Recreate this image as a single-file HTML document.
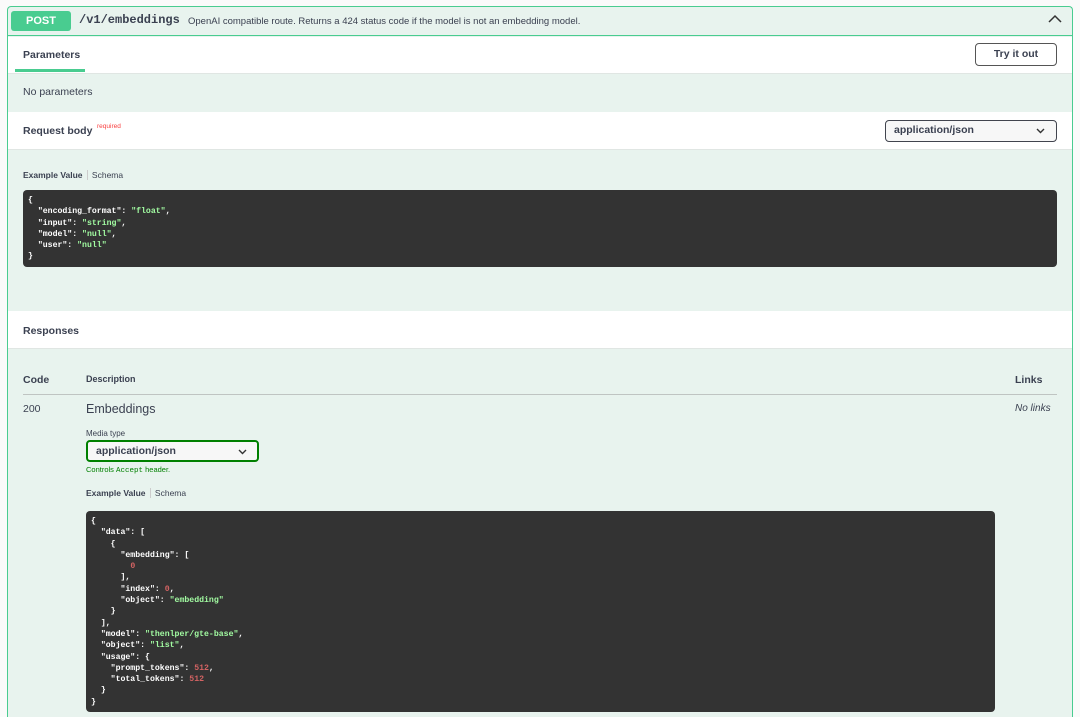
<!DOCTYPE html>
<html><head><style>
*{margin:0;padding:0;box-sizing:border-box}
html,body{width:1080px;height:717px;overflow:hidden}
body{background:#fafafa;font-family:"Liberation Sans",sans-serif;color:#3b4151;position:relative}
.a{position:absolute}
.box{left:7px;top:6px;width:1066px;height:711px;border:1px solid #49cc90;border-bottom:none;border-radius:4px 4px 0 0;background:#e8f3ee}
.w{background:#fff;left:8px;width:1064px}
pre{font-family:"Liberation Mono",monospace;font-weight:bold;font-size:8.2px;line-height:11.3px;color:#fff;background:#333;border-radius:4px;padding:5px 5px}
.s{color:#a2fca2}.n{color:#d36363}
.b{font-weight:bold;font-size:10.5px}
</style></head><body>
<div class="a box"></div>
<div class="a" style="left:8px;top:7px;width:1064px;height:29px;border-bottom:1px solid #49cc90"></div>
<div class="a" style="left:11px;top:11px;width:60px;height:20px;background:#49cc90;border-radius:3px;color:#fff;font-weight:bold;font-size:11px;text-align:center;line-height:20px">POST</div>
<div class="a" style="left:79px;top:13px;font-family:'Liberation Mono',monospace;font-weight:bold;font-size:12px">/v1/embeddings</div>
<div class="a" style="left:188px;top:16px;font-size:9.5px">OpenAI compatible route. Returns a 424 status code if the model is not an embedding model.</div>
<svg class="a" style="left:1048px;top:14px" width="14" height="10"><path d="M1 8 L7 2 L13 8" stroke="#333" stroke-width="1.5" fill="none"/></svg>
<div class="a w" style="top:37px;height:37px;border-bottom:1px solid #e0e6e3"></div>
<div class="a b" style="left:23px;top:49px">Parameters</div>
<div class="a" style="left:15px;top:69px;width:70px;height:3px;background:#49cc90"></div>
<div class="a" style="left:975px;top:43px;width:82px;height:23px;border:1.5px solid #555;border-radius:4px;font-weight:bold;font-size:10.5px;text-align:center;line-height:20px;background:#fff">Try it out</div>
<div class="a" style="left:23px;top:86px;font-size:10.5px">No parameters</div>
<div class="a w" style="top:112px;height:38px;border-bottom:1px solid #e0e6e3"></div>
<div class="a b" style="left:23px;top:125px">Request body</div>
<div class="a" style="left:97px;top:123px;font-size:6.5px;color:#f93e3e">required</div>
<div class="a" style="left:885px;top:120px;width:172px;height:22px;border:1.5px solid #41444e;border-radius:4px;background:#f7f7f7;font-weight:bold;font-size:10.5px;line-height:19px;padding-left:8px">application/json</div>
<svg class="a" style="left:1036px;top:128px" width="9" height="6"><path d="M1 1 L4.5 4.5 L8 1" stroke="#333" stroke-width="1.4" fill="none"/></svg>
<div class="a" style="left:23px;top:170px;font-size:8.5px"><b>Example Value</b> <span style="border-left:1px solid #ccc;padding-left:4px;margin-left:2px">Schema</span></div>
<pre class="a" style="left:23px;top:190px;width:1034px;height:77px">{
  "encoding_format": <span class="s">"float"</span>,
  "input": <span class="s">"string"</span>,
  "model": <span class="s">"null"</span>,
  "user": <span class="s">"null"</span>
}</pre>
<div class="a w" style="top:311px;height:38px;border-bottom:1px solid #e0e6e3"></div>
<div class="a b" style="left:23px;top:325px">Responses</div>
<div class="a b" style="left:23px;top:374px">Code</div>
<div class="a" style="left:86px;top:374px;font-weight:bold;font-size:9px">Description</div>
<div class="a b" style="left:1015px;top:374px">Links</div>
<div class="a" style="left:23px;top:394px;width:1034px;height:1px;background:#bfc4c2"></div>
<div class="a" style="left:23px;top:403px;font-size:10.5px">200</div>
<div class="a" style="left:86px;top:402px;font-size:12.5px">Embeddings</div>
<div class="a" style="left:1015px;top:403px;font-size:10px;font-style:italic">No links</div>
<div class="a" style="left:86px;top:429px;font-size:8px">Media type</div>
<div class="a" style="left:86px;top:440px;width:173px;height:22px;border:2px solid #008000;border-radius:4px;background:#f7f7f7;font-weight:bold;font-size:10.5px;line-height:18px;padding-left:8px">application/json</div>
<svg class="a" style="left:238px;top:449px" width="9" height="6"><path d="M1 1 L4.5 4.5 L8 1" stroke="#333" stroke-width="1.4" fill="none"/></svg>
<div class="a" style="left:86px;top:465px;font-size:7.5px;color:#008000">Controls <span style="font-family:'Liberation Mono',monospace">Accept</span> header.</div>
<div class="a" style="left:86px;top:488px;font-size:8.5px"><b>Example Value</b> <span style="border-left:1px solid #ccc;padding-left:4px;margin-left:2px">Schema</span></div>
<pre class="a" style="left:86px;top:511px;width:909px;height:201px">{
  "data": [
    {
      "embedding": [
        <span class="n">0</span>
      ],
      "index": <span class="n">0</span>,
      "object": <span class="s">"embedding"</span>
    }
  ],
  "model": <span class="s">"thenlper/gte-base"</span>,
  "object": <span class="s">"list"</span>,
  "usage": {
    "prompt_tokens": <span class="n">512</span>,
    "total_tokens": <span class="n">512</span>
  }
}</pre>
</body></html>
